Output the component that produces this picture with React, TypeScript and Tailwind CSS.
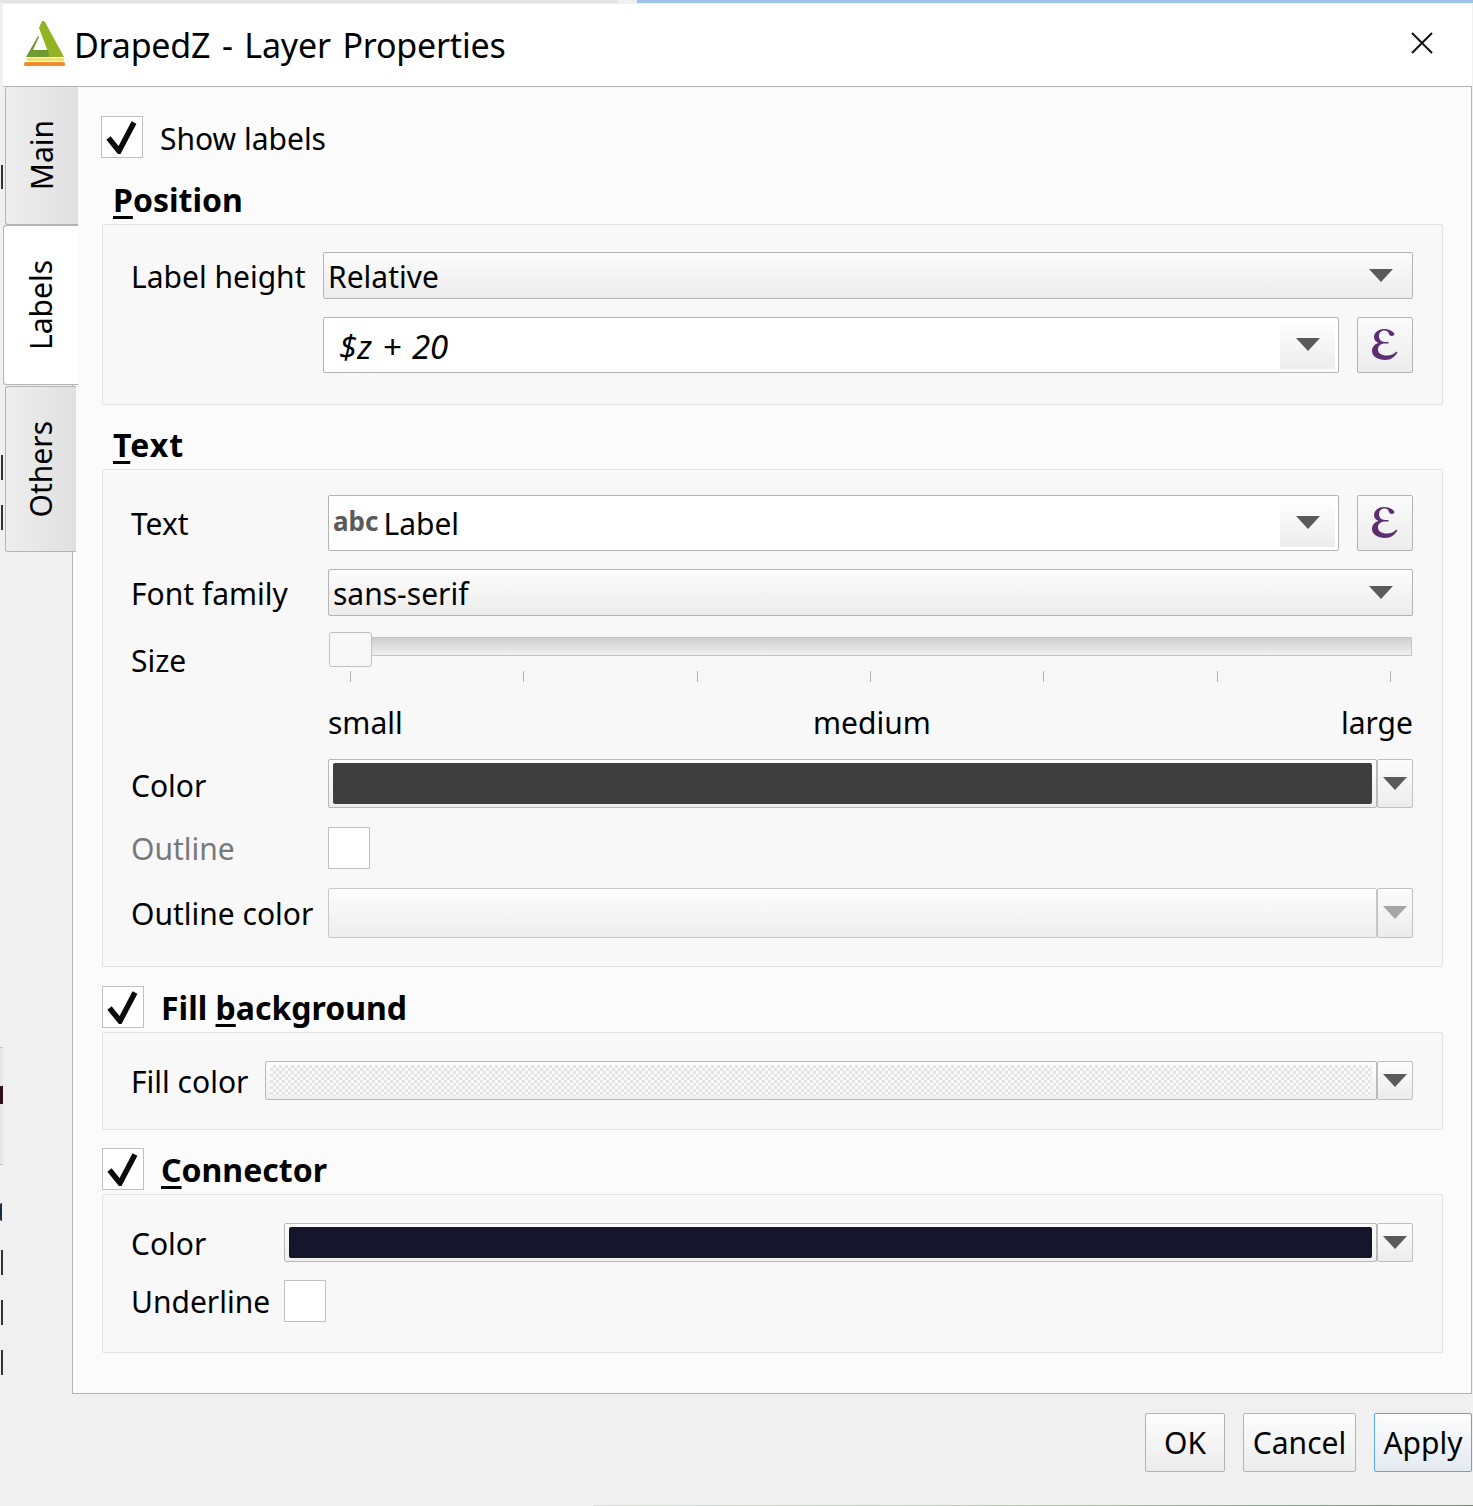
import type { ReactNode } from 'react';

const font = "font-['Noto_Sans',sans-serif]";

function Arrow({ disabled }: { disabled?: boolean }) {
    return (
        <svg width="24" height="14" viewBox="0 0 24 14">
            <path d="M0 0H24L12 13Z" fill={disabled ? '#a6a6a6' : '#5a5a5a'} />
        </svg>
    );
}

function Check() {
    return (
        <svg width="34" height="34" viewBox="0 0 34 34" fill="none">
            <path d="M3.500 18L14 31L29 2.500" stroke="#0a0a0a" strokeWidth="5.500" />
        </svg>
    );
}

function CheckBox({ checked, className = '' }: { checked?: boolean; className?: string }) {
    return (
        <div className={`flex h-[42px] w-[42px] shrink-0 items-center justify-center border border-[#c0c0c0] bg-white ${className}`}>
            {checked && <Check />}
        </div>
    );
}

function Epsilon() {
    return (
        <button className="flex h-[56px] w-[56px] shrink-0 items-center justify-center rounded-[2px] border border-[#b4b4b4] bg-gradient-to-b from-[#fbfbfb] to-[#ececec]">
            <svg width="32" height="38" viewBox="0 0 32 38">
                <path
                    d="M25.500 8C23.500 4.500 19.500 3 15 3C9 3 5 7 5 11C5 14 7 16 9.500 17C5.500 18 3 21 3 25C3 30.500 9 34 16 34C22 34 26 30.500 28.500 26.500L27.500 25.500C25 28 22 29.500 18 29.500C12 29.500 9 27 9 23.500C9 20 11.500 17.500 16 17.500H19.500V16H16C12 16 10 13 10 10.500C10 7 12 4.500 15.500 4.500C18 4.500 19.500 6 20 8C20.500 10.500 25 10.500 25.500 8Z"
                    fill="#5d2e6f"
                />
            </svg>
        </button>
    );
}

function Combo({ children, className = '' }: { children: ReactNode; className?: string }) {
    return (
        <div className={`flex items-center justify-between rounded-[2px] border border-[#b4b4b4] bg-gradient-to-b from-[#fcfcfc] to-[#ececec] pr-[19px] pl-[4px] ${className}`}>
            <span className="pt-[2px] text-[30px] leading-none">{children}</span>
            <Arrow />
        </div>
    );
}

function EditCombo({ children }: { children: ReactNode }) {
    return (
        <div className="flex h-[56px] min-w-0 flex-1 items-stretch rounded-[2px] border border-[#b4b4b4] bg-white p-[3px] pl-[4px]">
            <div className="flex flex-1 items-center pt-[2px] text-[30px] leading-none">{children}</div>
            <div className="flex w-[55px] items-center justify-center bg-gradient-to-b from-white to-[#ececec]">
                <Arrow />
            </div>
        </div>
    );
}

function ColorButton({ color, height, disabled, checker }: { color?: string; height: string; disabled?: boolean; checker?: boolean }) {
    return (
        <div className={`flex ${height} min-w-0 flex-1`}>
            <div className={`min-w-0 flex-1 rounded-[2px] border border-[#b8b8b8] bg-gradient-to-b from-[#fdfdfd] to-[#eeeeee] ${disabled ? 'border-[#c8c8c8]' : 'px-[4px] py-[3px]'}`}>
                {checker ? (
                    <div className="h-full w-full bg-[repeating-conic-gradient(#e4e4e4_0_25%,#fbfbfb_0_50%)] bg-[length:6px_6px]" />
                ) : (
                    !disabled && <div className="h-full w-full rounded-[2px]" style={{ backgroundColor: color }} />
                )}
            </div>
            <div className="flex w-[36px] shrink-0 items-center justify-center rounded-[2px] border border-[#c0c0c0] bg-gradient-to-b from-[#fcfcfc] to-[#ececec]">
                <Arrow disabled={disabled} />
            </div>
        </div>
    );
}

function Tab({ label, active, className }: { label: string; active?: boolean; className: string }) {
    return (
        <div className={`relative z-10 flex items-center justify-center rounded-l-[3px] border border-r-0 border-[#b4b4b4] ${active ? 'bg-white' : 'bg-gradient-to-r from-[#eeeeee] to-[#e0e0e0]'} ${className}`}>
            <span className="rotate-180 text-[30px] leading-none [writing-mode:vertical-rl]">{label}</span>
        </div>
    );
}

function Heading({ first, rest, className = '' }: { first: string; rest: string; className?: string }) {
    return (
        <div className={`text-[32px] leading-[40px] font-bold ${className}`}>
            <span className="underline decoration-[3px] underline-offset-[4px]">{first}</span>
            {rest}
        </div>
    );
}

function Group({ className, children }: { className: string; children: ReactNode }) {
    return <div className={`rounded-[2px] border border-[#e2e2e2] bg-[#f8f8f8] pr-[29px] pl-[28px] ${className}`}>{children}</div>;
}

function Label({ children, className = '' }: { children: ReactNode; className?: string }) {
    return <span className={`pt-[2px] text-[30px] leading-none ${className}`}>{children}</span>;
}

export default function App() {
    const ticks = [0, 1, 2, 3, 4, 5, 6];
    return (
        <div className={`${font} relative h-[1506px] w-[1473px] overflow-hidden bg-[#f0f0f0] text-black`}>
            {/* bits of the window behind the dialog */}
            <div className="absolute top-0 left-[637px] h-[3px] w-[836px] bg-[#9cc3e6]" />
            <div className="absolute top-0 left-0 h-[3px] w-[618px] bg-[#e4e4e4]" />
            <div className="absolute top-[165px] left-[1px] h-[24px] w-[2px] bg-[#333]" />
            <div className="absolute top-[455px] left-[1px] h-[25px] w-[2px] bg-[#333]" />
            <div className="absolute top-[505px] left-[1px] h-[25px] w-[2px] bg-[#333]" />
            <div className="absolute top-[1047px] left-0 h-[118px] w-[3px] border-y border-[#c4c4c4] bg-[#e6e6e6]" />
            <div className="absolute top-[1086px] left-0 h-[18px] w-[3px] bg-[#331020]" />
            <div className="absolute top-[1203px] left-0 h-[18px] w-[2px] rounded-l-full bg-[#1a2a3a]" />
            <div className="absolute top-[1250px] left-[1px] h-[25px] w-[2px] bg-[#333]" />
            <div className="absolute top-[1300px] left-[1px] h-[25px] w-[2px] bg-[#333]" />
            <div className="absolute top-[1350px] left-[1px] h-[25px] w-[2px] bg-[#333]" />
            <div className="absolute bottom-0 left-[593px] h-px w-[880px] bg-gradient-to-r from-[#dcdcdc] via-[#b9c8b0] to-[#6f8a74]" />

            <div className="pt-[4px] pr-px pl-[3px]">
                {/* title bar */}
                <div className="flex h-[83px] items-center border-b border-[#b4b4b4] bg-white pr-[39px] pl-[20px]">
                    <svg width="44" height="46" viewBox="0 0 44 46" className="mt-[-4px] shrink-0">
                        <path d="M18.500 2C19.500 0.500 21 0.500 22 2L41 37H27L16 8Z" fill="#93b322" />
                        <path d="M15 16L16 17L10 30H25L27 37H3Z" fill="#6f9a30" />
                        <rect x="4" y="38" width="37" height="3" fill="#ede27a" />
                        <rect x="1" y="42" width="41" height="4" rx="1.500" fill="#f08c2c" />
                    </svg>
                    <span className="ml-[7px] text-[34px] leading-none tracking-[-0.2px] [word-spacing:3px]">DrapedZ - Layer Properties</span>
                    <svg width="22" height="22" viewBox="0 0 22 22" className="mt-[-4px] ml-auto" fill="none">
                        <path d="M1 1L21 21M21 1L1 21" stroke="#111" strokeWidth="2" />
                    </svg>
                </div>

                <div className="flex">
                    {/* side tabs */}
                    <div className="flex w-[75px] shrink-0 flex-col items-start">
                        <Tab label="Main" className="ml-[2px] h-[138px] w-[73px] border-t-0" />
                        <Tab label="Labels" active className="h-[160px] w-[75px]" />
                        <Tab label="Others" className="mt-px ml-[2px] h-[166px] w-[71px]" />
                    </div>

                    {/* page */}
                    <div className="-ml-[6px] flex h-[1307px] flex-1 flex-col border-r border-b border-l border-[#b4b4b4] bg-[#fbfbfb] pt-[29px] pr-[28px] pl-[29px]">
                        <div className="-ml-px flex items-center">
                            <CheckBox checked />
                            <Label className="ml-[17px] pt-[4px]">Show labels</Label>
                        </div>

                        <Heading first="P" rest="osition" className="mt-[22px] ml-[11px]" />
                        <Group className="mt-[4px] h-[181px] pt-[27px]">
                            <div className="flex items-center">
                                <Label className="w-[192px] shrink-0">Label height</Label>
                                <Combo className="h-[47px] flex-1">Relative</Combo>
                            </div>
                            <div className="mt-[18px] ml-[192px] flex gap-[18px]">
                                <EditCombo>
                                    <span className="pl-[11px] text-[33px] italic [word-spacing:2px]">$z + 20</span>
                                </EditCombo>
                                <Epsilon />
                            </div>
                        </Group>

                        <Heading first="T" rest="ext" className="mt-[20px] ml-[11px] tracking-[1px]" />
                        <Group className="mt-[4px] h-[498px] pt-[25px]">
                            <div className="flex items-center">
                                <Label className="w-[197px] shrink-0">Text</Label>
                                <div className="flex min-w-0 flex-1 gap-[18px]">
                                    <EditCombo>
                                        <span className="mr-[5px] -mt-[6px] text-[26px] font-bold text-[#5a5a5a]">abc</span>
                                        Label
                                    </EditCombo>
                                    <Epsilon />
                                </div>
                            </div>
                            <div className="mt-[18px] flex items-center">
                                <Label className="w-[197px] shrink-0">Font family</Label>
                                <Combo className="h-[47px] flex-1">sans-serif</Combo>
                            </div>
                            <div className="mt-[16px] flex">
                                <Label className="mt-[12px] w-[197px] shrink-0">Size</Label>
                                <div className="min-w-0 flex-1">
                                    <div className="relative h-[35px]">
                                        <div className="absolute top-[5px] right-px left-[40px] h-[19px] border border-[#c4c4c4] bg-gradient-to-b from-[#cfcfcf] to-[#f0f0f0]" />
                                        <div className="absolute top-0 left-px h-[35px] w-[43px] rounded-[3px] border border-[#c0c0c0] bg-[#f8f8f8]" />
                                    </div>
                                    <div className="mt-[4px] flex justify-between pr-[22px] pl-[22px]">
                                        {ticks.map((t) => (
                                            <div key={t} className="h-[11px] w-px bg-[#b4b4b4]" />
                                        ))}
                                    </div>
                                    <div className="mt-[24px] flex justify-between">
                                        <Label>small</Label>
                                        <Label>medium</Label>
                                        <Label>large</Label>
                                    </div>
                                </div>
                            </div>
                            <div className="mt-[21px] flex items-center">
                                <Label className="w-[197px] shrink-0 pt-[4px]">Color</Label>
                                <ColorButton color="#3e3e3e" height="h-[49px]" />
                            </div>
                            <div className="mt-[19px] flex items-center">
                                <Label className="w-[197px] shrink-0 text-[#787878]">Outline</Label>
                                <CheckBox />
                            </div>
                            <div className="mt-[19px] flex items-center">
                                <Label className="w-[197px] shrink-0">Outline color</Label>
                                <ColorButton disabled height="h-[50px]" />
                            </div>
                        </Group>

                        <div className="mt-[19px] flex items-center">
                            <CheckBox checked />
                            <div className="ml-[17px] pt-[2px] text-[32px] leading-none font-bold">
                                Fill <span className="underline decoration-[3px] underline-offset-[4px]">b</span>ackground
                            </div>
                        </div>
                        <Group className="mt-[4px] h-[98px] pt-[28px]">
                            <div className="flex items-center">
                                <Label className="w-[134px] shrink-0">Fill color</Label>
                                <ColorButton checker height="h-[39px]" />
                            </div>
                        </Group>

                        <div className="mt-[18px] flex items-center">
                            <CheckBox checked />
                            <div className="ml-[17px] pt-[2px] text-[32px] leading-none font-bold">
                                <span className="underline decoration-[3px] underline-offset-[4px]">C</span>onnector
                            </div>
                        </div>
                        <Group className="mt-[4px] h-[159px] pt-[28px]">
                            <div className="flex items-center">
                                <Label className="w-[153px] shrink-0">Color</Label>
                                <ColorButton color="#15152b" height="h-[39px]" />
                            </div>
                            <div className="mt-[18px] flex items-center">
                                <Label className="w-[153px] shrink-0">Underline</Label>
                                <CheckBox />
                            </div>
                        </Group>
                    </div>
                </div>

                {/* dialog buttons */}
                <div className="mt-[19px] flex justify-end gap-[18px]">
                    <button className="h-[59px] w-[80px] rounded-[2px] border border-[#b4b4b4] bg-gradient-to-b from-[#fdfdfd] to-[#ececec] text-[30px] leading-none">OK</button>
                    <button className="h-[59px] w-[113px] rounded-[2px] border border-[#b4b4b4] bg-gradient-to-b from-[#fdfdfd] to-[#ececec] text-[30px] leading-none">Cancel</button>
                    <button className="h-[59px] w-[98px] rounded-[2px] border border-[#56a8ee] bg-gradient-to-b from-[#fdfdfd] to-[#e4eaf0] text-[30px] leading-none">Apply</button>
                </div>
            </div>
        </div>
    );
}
